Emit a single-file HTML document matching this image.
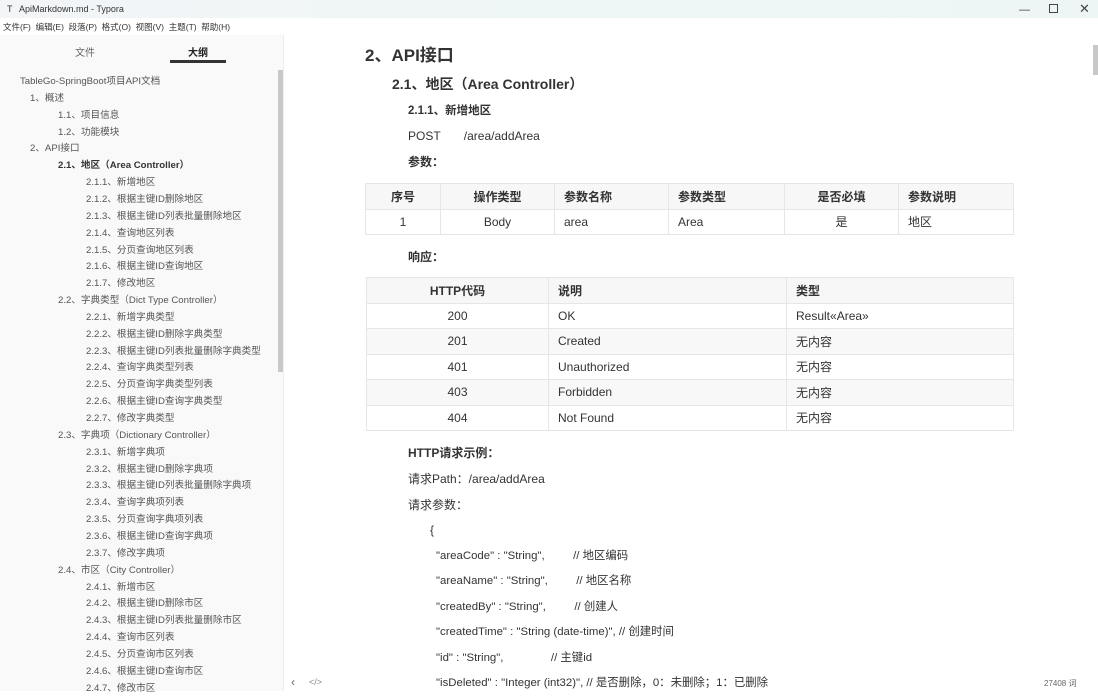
<!DOCTYPE html>
<html><head><meta charset="utf-8">
<style>
*{margin:0;padding:0;box-sizing:border-box}
body{width:1098px;height:691px;overflow:hidden;background:#fff;position:relative;font-family:"Liberation Sans","Noto Sans CJK SC",sans-serif;color:#333}
.a{position:absolute;white-space:nowrap}
#title{left:0;top:0;width:1098px;height:18px;background:linear-gradient(90deg,#f3f5f7,#eef6f6 60%,#eef5f5)}
#menu{left:0;top:18px;width:1098px;height:17px;background:#fff}
#side{left:0;top:35px;width:284px;height:656px;background:#f9f9f9;border-right:1px solid #eee}
.o{position:absolute;font-size:9.6px;line-height:16px;color:#555;white-space:nowrap}
.t{font-size:12px;line-height:16px;color:#333}
.cd{font-size:11.4px}
table{position:absolute;border-collapse:collapse;font-size:12px;color:#333}
td,th{border:1px solid #e6e6e6;padding:0 9px;height:25.5px}
th{background:#f7f7f7;font-weight:bold}
.c{text-align:center}
</style></head><body>
<div id="title" class="a"></div>
<div class="a" style="left:7px;top:4px;font-size:9px;color:#333">T</div>
<div class="a" style="left:19px;top:4px;font-size:9px;color:#333">ApiMarkdown.md - Typora</div>
<div class="a" style="left:1019px;top:4px;font-size:11px;color:#444">—</div>
<div class="a" style="left:1049px;top:4px;width:9px;height:9px;border:1px solid #444"></div>
<div class="a" style="left:1079px;top:1px;font-size:13px;color:#444">✕</div>
<div id="menu" class="a"></div>
<div class="a" style="left:3px;top:21px;font-size:8.5px;color:#333">文件(F)&nbsp; 编辑(E)&nbsp; 段落(P)&nbsp; 格式(O)&nbsp; 视图(V)&nbsp; 主题(T)&nbsp; 帮助(H)</div>
<div id="side" class="a"></div>
<div class="a" style="left:75px;top:44px;font-size:10px;color:#666">文件</div>
<div class="a" style="left:188px;top:44px;font-size:10px;color:#222;font-weight:bold">大纲</div>
<div class="a" style="left:170px;top:60px;width:56px;height:3px;background:#333"></div>
<div class="a" style="left:278px;top:70px;width:5px;height:302px;background:#c8c8c8"></div>
<div id="outline"></div>
<script>
var items=[[20,"TableGo-SpringBoot项目API文档"],[30,"1、概述"],[58,"1.1、项目信息"],[58,"1.2、功能模块"],[30,"2、API接口"],[58,"2.1、地区（Area Controller）",1]];
var g=[["2.1","地区"],["2.2","字典类型","Dict Type Controller"],["2.3","字典项","Dictionary Controller"],["2.4","市区","City Controller"]];
g.forEach(function(x,i){
 if(i>0)items.push([58,x[0]+"、"+x[1]+"（"+x[2]+"）"]);
 var n=x[1];
 var s=["新增"+n,"根据主键ID删除"+n,"根据主键ID列表批量删除"+n,"查询"+n+"列表","分页查询"+n+"列表","根据主键ID查询"+n,"修改"+n];
 s.forEach(function(t,j){items.push([86,x[0]+"."+(j+1)+"、"+t]);});
});
var h="";
items.forEach(function(it,i){var y=74+i*16.85;h+='<div class="o" style="left:'+it[0]+'px;top:'+y+'px;'+(it[2]?'font-weight:bold;color:#333':'')+'">'+it[1]+'</div>';});
document.getElementById("outline").innerHTML=h;
</script>
<div class="a" style="left:1093px;top:45px;width:5px;height:30px;background:#c8c8c8"></div>

<div class="a" style="left:365px;top:41px;font-size:17px;font-weight:bold;color:#333">2、API接口</div>
<div class="a" style="left:392px;top:74px;font-size:14px;font-weight:bold;color:#333">2.1、地区（Area Controller）</div>
<div class="a" style="left:408px;top:102px;font-size:11.5px;font-weight:bold;color:#333">2.1.1、新增地区</div>
<div class="a t" style="left:408px;top:128px">POST &nbsp; &nbsp; &nbsp; /area/addArea</div>
<div class="a t" style="left:408px;top:154px;font-weight:bold">参数：</div>
<table style="left:365px;top:183px;width:649px">
<tr><th class="c" style="width:75px">序号</th><th class="c" style="width:114px">操作类型</th><th style="text-align:left;width:114px">参数名称</th><th style="text-align:left;width:116px">参数类型</th><th class="c" style="width:114px">是否必填</th><th style="text-align:left">参数说明</th></tr>
<tr><td class="c">1</td><td class="c">Body</td><td>area</td><td>Area</td><td class="c">是</td><td>地区</td></tr>
</table>
<div class="a t" style="left:408px;top:249px;font-weight:bold">响应：</div>
<table style="left:366px;top:277px;width:648px">
<tr><th class="c" style="width:182px">HTTP代码</th><th style="text-align:left;width:238px">说明</th><th style="text-align:left">类型</th></tr>
<tr><td class="c">200</td><td>OK</td><td>Result«Area»</td></tr>
<tr style="background:#f8f8f8"><td class="c">201</td><td>Created</td><td>无内容</td></tr>
<tr><td class="c">401</td><td>Unauthorized</td><td>无内容</td></tr>
<tr style="background:#f8f8f8"><td class="c">403</td><td>Forbidden</td><td>无内容</td></tr>
<tr><td class="c">404</td><td>Not Found</td><td>无内容</td></tr>
</table>
<div class="a t" style="left:408px;top:445px;font-weight:bold">HTTP请求示例：</div>
<div class="a t" style="left:408px;top:471px">请求Path：/area/addArea</div>
<div class="a t" style="left:408px;top:497px">请求参数：</div>
<div class="a t" style="left:430px;top:522px">{</div>
<div class="a t cd" style="left:436px;top:548px">"areaCode" : "String", &nbsp; &nbsp; &nbsp; &nbsp; // 地区编码</div>
<div class="a t cd" style="left:436px;top:573px">"areaName" : "String", &nbsp; &nbsp; &nbsp; &nbsp; // 地区名称</div>
<div class="a t cd" style="left:436px;top:599px">"createdBy" : "String", &nbsp; &nbsp; &nbsp; &nbsp; // 创建人</div>
<div class="a t cd" style="left:436px;top:624px">"createdTime" : "String (date-time)", // 创建时间</div>
<div class="a t cd" style="left:436px;top:650px">"id" : "String", &nbsp; &nbsp; &nbsp; &nbsp; &nbsp; &nbsp; &nbsp; // 主键id</div>
<div class="a t cd" style="left:436px;top:675px">"isDeleted" : "Integer (int32)", // 是否删除，0：未删除；1：已删除</div>
<div class="a" style="left:291px;top:675px;font-size:12px;color:#666">‹</div>
<div class="a" style="left:309px;top:677px;font-size:9px;color:#888">&lt;/&gt;</div>
<div class="a" style="left:1044px;top:678px;font-size:8px;color:#666">27408 词</div>
</body></html>
